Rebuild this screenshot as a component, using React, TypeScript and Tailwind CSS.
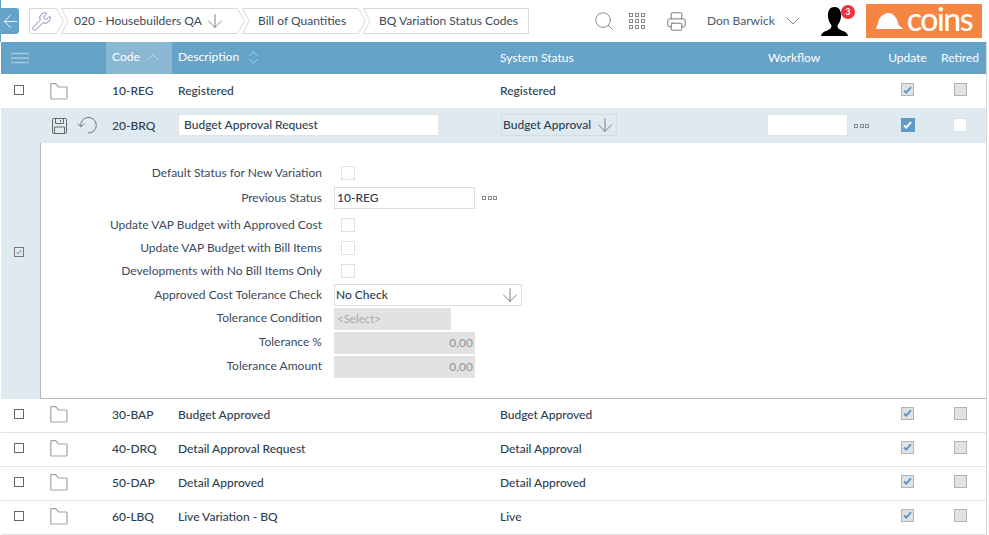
import React from 'react';
import { ArrowDown, ArrowLeft, ChevronDown, ChevronUp, Printer, Search, Wrench } from 'lucide-react';

const COLS = 'grid grid-cols-[40px_65px_66px_323px_267px_119px_53px_52px] items-center';

const rows = [
  { code: '30-BAP', desc: 'Budget Approved', status: 'Budget Approved' },
  { code: '40-DRQ', desc: 'Detail Approval Request', status: 'Detail Approval' },
  { code: '50-DAP', desc: 'Detail Approved', status: 'Detail Approved' },
  { code: '60-LBQ', desc: 'Live Variation - BQ', status: 'Live' },
];

const Crumb = ({ width, first, last, children }: { width: number; first?: boolean; last?: boolean; children: React.ReactNode }) => {
  const w = width - 0.5;
  const notch = first ? `L0.5 25.5 L0.5 0.5` : `L0.5 25.5 L7 13 L0.5 0.5`;
  const right = last ? `L${w} 0.5 L${w} 25.5` : `L${w - 7} 0.5 L${w} 13 L${w - 7} 25.5`;
  return (
    <div className={`relative h-[26px] flex items-center shrink-0 ${first ? '' : '-ml-[3px]'}`} style={{ width }}>
      <svg className="absolute inset-0" width={width} height={26} fill="none">
        <path d={`M0.5 0.5 ${right} ${notch}Z`} stroke="#d9d9d9" fill="#fff" />
      </svg>
      <div className="relative flex items-center whitespace-nowrap">{children}</div>
    </div>
  );
};

const Box = () => <div className="w-[10px] h-[10px] border border-[#666666] ml-[13px] -mt-[2px]" />;

const Folder = () => (
  <svg width="18" height="17" viewBox="0 0 18 17" fill="none" stroke="#a3a3a3" strokeWidth="1.2" className="ml-[9px]">
    <path d="M0.8 15 V1.2 Q0.8 0.7 1.4 0.7 H5.6 L8.6 4 H16.2 Q17 4 17 4.8 V15.2 Q17 16 16.2 16 H1.8 Q0.8 16 0.8 15 Z" />
  </svg>
);

const Tick = ({ color, width = 2 }: { color: string; width?: number }) => (
  <svg width="9" height="8" viewBox="0 0 9 8" fill="none">
    <path d="M1 4.5 L3.3 6.6 L8 1.2" stroke={color} strokeWidth={width} />
  </svg>
);

const ReadOnlyCheck = ({ checked }: { checked?: boolean }) => (
  <div className="w-[13px] h-[13px] mx-auto -mt-[3px] border border-[#b3b3b3] bg-[#e2e2e2] flex items-center justify-center">
    {checked && <Tick color="#5b97cb" />}
  </div>
);

const EmptyCheck = () => <div className="w-[14px] h-[14px] border border-[#e0e0e0] bg-white" />;

const Dots = () => (
  <div className="flex gap-[1.5px]">
    <div className="w-[4px] h-[4px] border border-[#8c8c8c]" />
    <div className="w-[4px] h-[4px] border border-[#8c8c8c]" />
    <div className="w-[4px] h-[4px] border border-[#8c8c8c]" />
  </div>
);

const GridIcon = () => (
  <div className="grid grid-cols-3 gap-[2px]">
    {Array.from({ length: 9 }).map((_, i) => (
      <div key={i} className="w-[4px] h-[4px] border border-[#8a8a8a]" />
    ))}
  </div>
);

const Label = ({ children, raised }: { children: React.ReactNode; raised?: boolean }) => (
  <div className={`w-[281px] text-right leading-[14px] text-[#3b4a5c] ${raised ? 'pb-[2px]' : ''}`}>{children}</div>
);

const App = () => {
  return (
    <div className="w-[989px] h-[535px] bg-white overflow-hidden text-[#2c3e50] font-['Lato','Liberation_Sans',sans-serif] text-[12px]">
      {/* top bar */}
      <div className="h-[42px] flex items-center border-l border-[#66a3c8]">
        <div className="w-[18px] h-[26px] shrink-0 bg-[#66a3c8] rounded-r-[3px] flex items-center justify-center">
          <ArrowLeft size={21} color="#ffffff" strokeWidth={1} className="shrink-0" />
        </div>
        <div className="ml-[10px] flex">
          <Crumb width={35} first>
            <Wrench size={21} color="#8671b8" strokeWidth={1} className="ml-[2px]" />
          </Crumb>
          <Crumb width={184}>
            <span className="ml-[13px] text-[#3a4a5a]">020 - Housebuilders QA</span>
            <ArrowDown size={22} color="#777777" strokeWidth={1} className="ml-[2px]" />
          </Crumb>
          <Crumb width={124}>
            <span className="ml-[16px] text-[#3a4a5a]">Bill of Quantities</span>
          </Crumb>
          <Crumb width={166} last>
            <span className="ml-[16px] text-[#3a4a5a]">BQ Variation Status Codes</span>
          </Crumb>
        </div>
        <Search size={22} color="#808080" strokeWidth={1} className="ml-[64px] shrink-0" />
        <div className="ml-[14px]"><GridIcon /></div>
        <Printer size={21} color="#777777" strokeWidth={1.1} className="ml-[21px] shrink-0" />
        <span className="ml-[20px] text-[#4a5a6a] whitespace-nowrap">Don Barwick</span>
        <ChevronDown size={24} color="#777777" strokeWidth={0.9} className="ml-[6px] shrink-0" />
        <div className="relative ml-[16px] w-[27px] h-[29px] shrink-0">
          <svg width="27" height="29" viewBox="0 0 27 29" fill="#000">
            <path d="M13.5 0 C19 0 20.5 5 20 10 C19.6 14 17.5 17 16.5 18.5 C16.5 21 18 22.5 22 24 C25 25 26.5 26.5 27 29 H0 C0.5 26.5 2 25 5 24 C9 22.5 10.5 21 10.5 18.5 C9.5 17 7.4 14 7 10 C6.5 5 8 0 13.5 0Z" />
          </svg>
          <div className="absolute -top-[2px] left-[20px] w-[14px] h-[14px] rounded-full bg-[#f0323c] text-white text-[9px] font-bold flex items-center justify-center">3</div>
        </div>
        <div className="ml-[18px] w-[116px] h-[34px] shrink-0 bg-[#f58542] flex items-center pl-[9px]">
          <svg width="28" height="16" viewBox="0 0 28 16" fill="#fff">
            <path d="M1 16 H28 C27 14 24.5 13 23.5 12 C22.5 5 18.5 0 13.5 0 C7.5 0 3.5 5 3 11 C2 12.5 1 14 1 16Z" />
          </svg>
          <span className="ml-[4px] text-white text-[32px] leading-none font-medium tracking-[-1.5px] -mt-[4px]">coins</span>
        </div>
      </div>

      <div className="ml-px w-[986px] h-[493px] border-r border-[#d6d6d6]">
        {/* header */}
        <div className={`${COLS} h-[32px] bg-[#66a3c8] text-white`}>
          <div className="pl-[10px]">
            <svg width="18" height="12" viewBox="0 0 18 12" stroke="#a9cce0" strokeWidth="1.4">
              <path d="M0 1.5 H18 M0 6 H18 M0 10.5 H18" />
            </svg>
          </div>
          <div />
          <div className="h-full bg-[#8ab8d2] pl-[6px] pb-[2px] flex items-center">
            Code
            <ChevronUp size={20} color="#d5e6ef" strokeWidth={1} className="ml-[3px]" />
          </div>
          <div className="pl-[6px] pb-[2px] flex items-center">
            Description
            <svg width="11" height="13" viewBox="0 0 11 13" fill="none" stroke="#a9cce0" className="ml-[9px]">
              <path d="M1 5 L5.5 0.8 L10 5 M1 8 L5.5 12.2 L10 8" />
            </svg>
          </div>
          <div className="pl-[5px]">System Status</div>
          <div className="pl-[6px]">Workflow</div>
          <div className="text-center">Update</div>
          <div className="text-center">Retired</div>
        </div>

        {/* registered row */}
        <div className={`${COLS} h-[34px] bg-white font-medium`}>
          <Box />
          <Folder />
          <div className="pl-[6px]">10-REG</div>
          <div className="pl-[6px]">Registered</div>
          <div className="pl-[5px]">Registered</div>
          <div />
          <ReadOnlyCheck checked />
          <ReadOnlyCheck />
        </div>

        {/* row being edited */}
        <div className={`${COLS} h-[35px] bg-[#dfeaf0] font-medium`}>
          <div />
          <div className="flex items-center pl-[11px] gap-[10px]">
            <svg width="15" height="16" viewBox="0 0 15 16" fill="none" stroke="#666666">
              <path d="M1.5 0.5 H13.5 Q14.5 0.5 14.5 1.5 V14.5 Q14.5 15.5 13.5 15.5 H1.5 Q0.5 15.5 0.5 14.5 V1.5 Q0.5 0.5 1.5 0.5Z" />
              <path d="M3.5 0.5 V5.5 H11.5 V0.5 M8.5 2 V4 M2.5 15.5 V9 H12.5 V15.5" />
            </svg>
            <svg width="20" height="17" viewBox="0 0 20 17" fill="none" stroke="#737373">
              <path d="M3.8 9.5 A7.8 7.8 0 1 1 11 16" />
              <path d="M0.5 6.5 L3.8 9.8 L7.5 6.5" />
            </svg>
          </div>
          <div className="pl-[6px]">20-BRQ</div>
          <div className="pl-[6px]">
            <div className="w-[261px] h-[22px] -mt-px bg-white border border-[#e3e3e3] flex items-center pl-[5px]">Budget Approval Request</div>
          </div>
          <div className="pl-[6px]">
            <div className="w-[116px] h-[22px] -mt-px border border-[#d3dcdf] flex items-center justify-between pl-[1px]">
              Budget Approval
              <ArrowDown size={22} color="#777777" strokeWidth={1} className="shrink-0" />
            </div>
          </div>
          <div className="pl-[5px] flex items-center">
            <div className="w-[81px] h-[22px] -mt-px bg-white border border-[#e3e3e3]" />
            <div className="ml-[6px]"><Dots /></div>
          </div>
          <div className="w-[14px] h-[14px] mx-auto -mt-[2px] bg-[#5f9bc7] flex items-center justify-center">
            <Tick color="#ffffff" />
          </div>
          <div className="mx-auto -mt-[2px]"><EmptyCheck /></div>
        </div>

        {/* expanded detail */}
        <div className="flex h-[256px]">
          <div className="w-[40px] bg-[#dfeaf0] flex items-center justify-center pb-[38px] pr-[3px] border-r border-[#b8b8b8]">
            <div className="w-[10px] h-[10px] border border-[#777777] flex items-center justify-center">
              <svg width="6" height="6" viewBox="0 0 9 8" fill="none"><path d="M1 4.5 L3.3 6.6 L8 1.2" stroke="#777777" strokeWidth="1.4" /></svg>
            </div>
          </div>
          <div className="flex-1 border-b border-[#b8b8b8] pt-[23px]">
            <div className="flex items-center">
              <Label>Default Status for New Variation</Label>
              <div className="ml-[19px]"><EmptyCheck /></div>
            </div>
            <div className="flex items-center mt-[7px]">
              <Label>Previous Status</Label>
              <div className="ml-[12px] w-[141px] h-[22px] border border-[#dedede] flex items-center pl-[2px] font-medium">10-REG</div>
              <div className="ml-[7px]"><Dots /></div>
            </div>
            <div className="flex items-center mt-[9px]">
              <Label>Update VAP Budget with Approved Cost</Label>
              <div className="ml-[19px]"><EmptyCheck /></div>
            </div>
            <div className="flex items-center mt-[9px]">
              <Label>Update VAP Budget with Bill Items</Label>
              <div className="ml-[19px]"><EmptyCheck /></div>
            </div>
            <div className="flex items-center mt-[9px]">
              <Label>Developments with No Bill Items Only</Label>
              <div className="ml-[19px]"><EmptyCheck /></div>
            </div>
            <div className="flex items-center mt-[6px]">
              <Label>Approved Cost Tolerance Check</Label>
              <div className="ml-[12px] w-[188px] h-[22px] border border-[#dedede] flex items-center justify-between pl-[1px] font-medium">
                No Check
                <ArrowDown size={22} color="#777777" strokeWidth={1} className="shrink-0" />
              </div>
            </div>
            <div className="flex items-center mt-[2px]">
              <Label raised>Tolerance Condition</Label>
              <div className="ml-[12px] w-[117px] h-[22px] bg-[#e2e2e2] flex items-center pl-[3px] text-[11.5px] text-[#ababab]">&lt;Select&gt;</div>
            </div>
            <div className="flex items-center mt-[2px]">
              <Label raised>Tolerance %</Label>
              <div className="ml-[12px] w-[141px] h-[22px] bg-[#e2e2e2] flex items-center justify-end pr-[2px] text-[#9a9a9a] font-medium">0.00</div>
            </div>
            <div className="flex items-center mt-[2px]">
              <Label raised>Tolerance Amount</Label>
              <div className="ml-[12px] w-[141px] h-[22px] bg-[#e2e2e2] flex items-center justify-end pr-[2px] text-[#9a9a9a] font-medium">0.00</div>
            </div>
          </div>
        </div>

        {/* remaining rows */}
        {rows.map((row) => (
          <div key={row.code} className={`${COLS} h-[34px] pb-[2px] border-b border-[#e4e4e4] font-medium`}>
            <Box />
            <Folder />
            <div className="pl-[6px]">{row.code}</div>
            <div className="pl-[6px]">{row.desc}</div>
            <div className="pl-[5px]">{row.status}</div>
            <div />
            <ReadOnlyCheck checked />
            <ReadOnlyCheck />
          </div>
        ))}
      </div>
    </div>
  );
};

export default App;
